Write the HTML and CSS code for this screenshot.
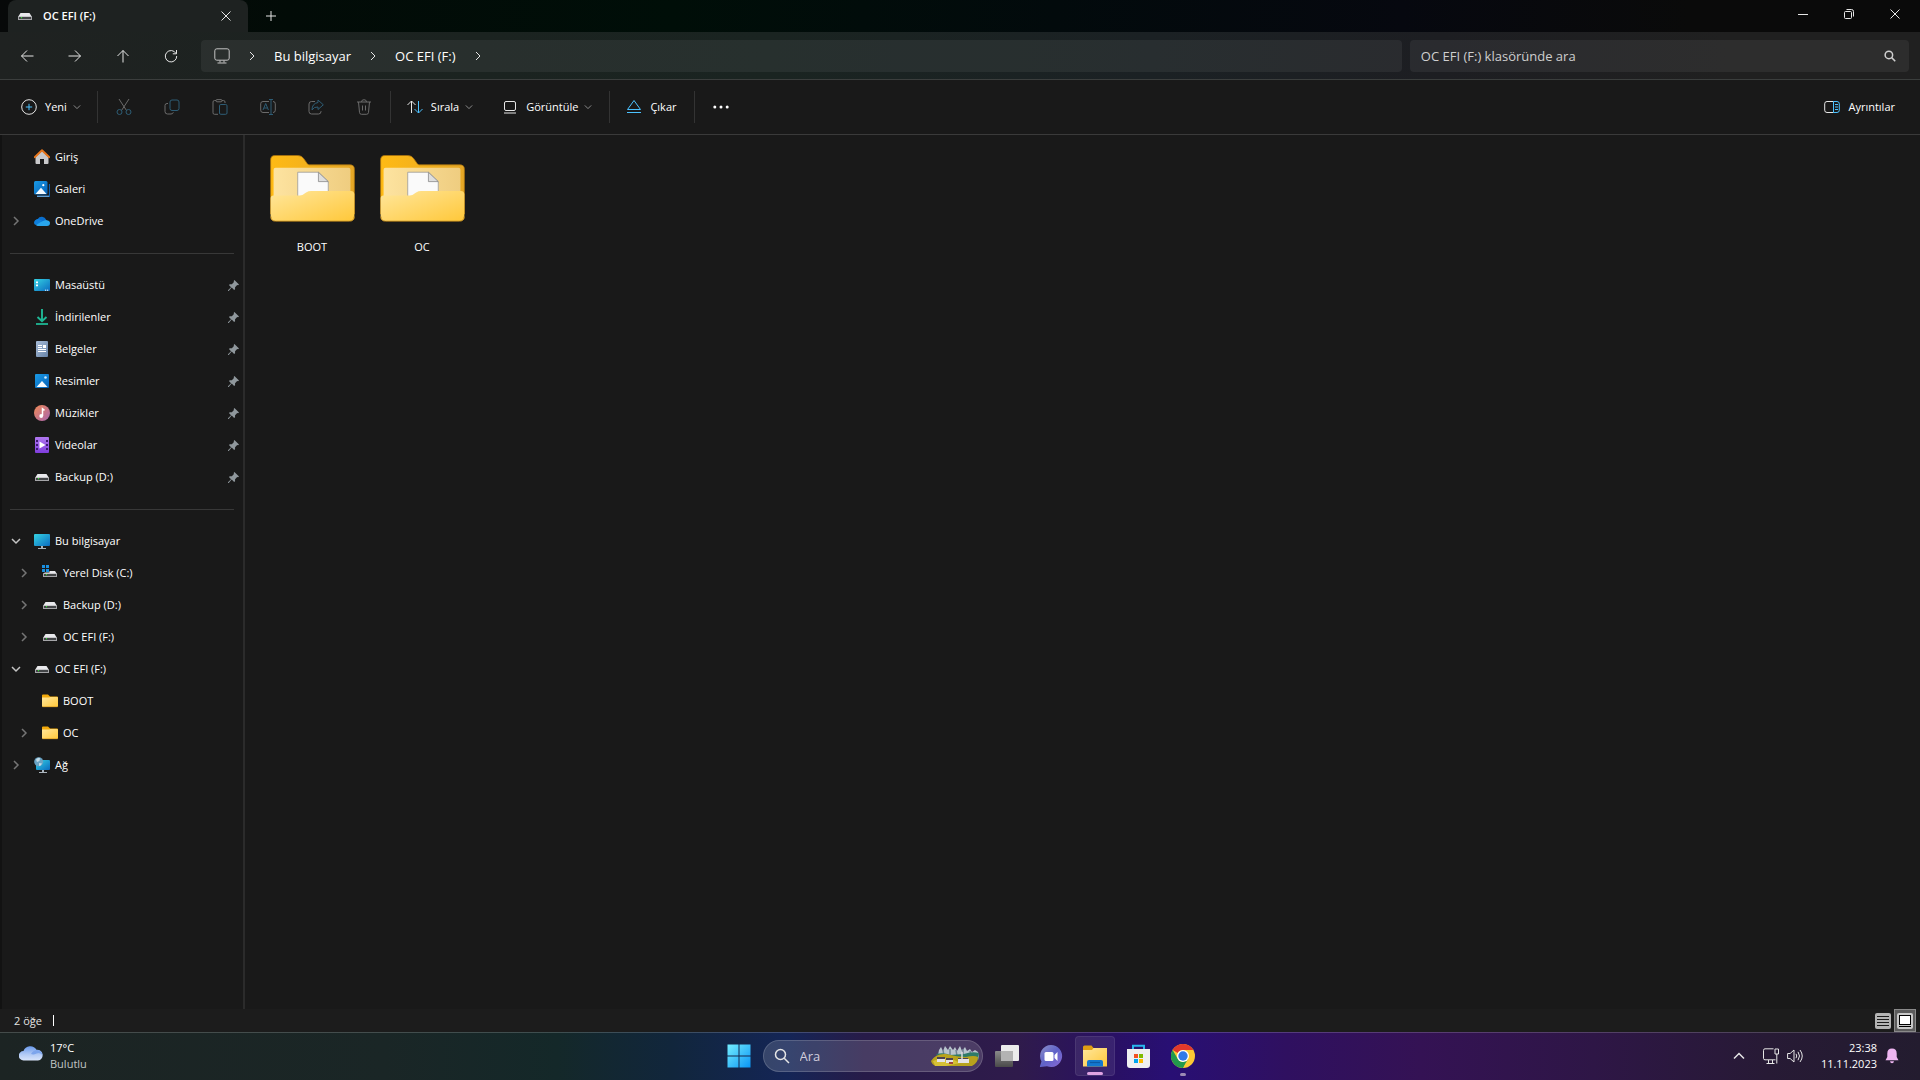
FILE: index.html
```html
<!DOCTYPE html>
<html lang="tr">
<head>
    <meta charset="UTF-8">
    <meta name="viewport" content="width=device-width, initial-scale=1.0">
    <title>OC EFI (F:)</title>
    <link rel="stylesheet" href="styles.css">
</head>
<body>
    <!-- shared icons -->
    <svg class="defs" aria-hidden="true">
        <defs>
            <linearGradient id="g-front" x1="0" y1="0" x2="1" y2="1">
                <stop offset="0" stop-color="#ffe69b"/><stop offset="1" stop-color="#ffc83a"/>
            </linearGradient>
            <linearGradient id="g-back" x1="0" y1="0" x2="1" y2="0">
                <stop offset="0" stop-color="#ffba14"/><stop offset="1" stop-color="#e5a726"/>
            </linearGradient>
            <linearGradient id="g-inner" x1="0" y1="0" x2="1" y2="0">
                <stop offset="0" stop-color="#fde3a0"/><stop offset="1" stop-color="#efcd80"/>
            </linearGradient>
            <linearGradient id="g-blue" x1="0" y1="0" x2="1" y2="1">
                <stop offset="0" stop-color="#1a9be6"/><stop offset="1" stop-color="#0560b8"/>
            </linearGradient>
            <linearGradient id="g-cyan" x1="0" y1="0" x2="1" y2="1">
                <stop offset="0" stop-color="#35d3e3"/><stop offset="1" stop-color="#0b6bc0"/>
            </linearGradient>
            <linearGradient id="g-music" x1="0" y1="0" x2="1" y2="1">
                <stop offset="0" stop-color="#f08a55"/><stop offset="1" stop-color="#a765b0"/>
            </linearGradient>
            <linearGradient id="g-video" x1="0" y1="0" x2="0" y2="1">
                <stop offset="0" stop-color="#b077f0"/><stop offset="1" stop-color="#7f3ddd"/>
            </linearGradient>
            <linearGradient id="g-doc" x1="0" y1="0" x2="1" y2="1">
                <stop offset="0" stop-color="#a9bdd8"/><stop offset="1" stop-color="#6683a8"/>
            </linearGradient>
            <linearGradient id="g-win" x1="0" y1="0" x2="1" y2="1">
                <stop offset="0" stop-color="#74eeff"/><stop offset="1" stop-color="#0a95f5"/>
            </linearGradient>
            <linearGradient id="g-chat" x1="0" y1="0" x2="1" y2="1">
                <stop offset="0" stop-color="#8d91c8"/><stop offset=".5" stop-color="#5f62c8"/><stop offset="1" stop-color="#8a6ad6"/>
            </linearGradient>
            <linearGradient id="g-cloud" x1="0" y1="0" x2="0" y2="1">
                <stop offset="0" stop-color="#6b9bec"/><stop offset=".6" stop-color="#b5ccf5"/><stop offset="1" stop-color="#d8e4fa"/>
            </linearGradient>
            <linearGradient id="g-dark" x1="0" y1="0" x2="0" y2="1">
                <stop offset="0" stop-color="#8a8a8a"/><stop offset="1" stop-color="#4a4a4a"/>
            </linearGradient>
        </defs>
        <symbol id="i-drive" viewBox="0 0 16 16">
            <path d="M3.500 5h9L15 9H1z" fill="#e9e9ec"/>
            <path d="M1 8.500h14V12H1z" fill="#a5a5a8"/>
            <path d="M2 9h12v2H2z" fill="#434547"/>
            <path d="M4 9h1v1.300H4z" fill="#2be82b"/>
        </symbol>
        <symbol id="i-drive-c" viewBox="0 0 16 16">
            <path d="M4 6h9l2 3H1z" fill="#e9e9ec"/>
            <path d="M1 8.500h14V12H1z" fill="#a5a5a8"/>
            <path d="M2 9h12v2H2z" fill="#434547"/>
            <path d="M4 9h1v1.300H4z" fill="#2be82b"/>
            <path d="M0 0h7.500v7.500H0z" fill="#191919"/>
            <path d="M0 0h3v3H0zM4 0h3v3H4zM0 4h3v3H0zM4 4h3v3H4z" fill="#1a8fe0"/>
        </symbol>
        <symbol id="i-folder" viewBox="0 0 16 16">
            <path d="M0 2.500Q0 1.500 1 1.500h5L8 3.500h7q1 0 1 1V7H0z" fill="#f2a90b"/>
            <path d="M0 4.500h7L8.500 4H15q1 0 1 1v8q0 1-1 1H1q-1 0-1-1z" fill="url(#g-front)"/>
            <path d="M.5 13.700h15" stroke="#d99a1e" stroke-width=".7"/>
        </symbol>
        <symbol id="i-home" viewBox="0 0 16 16">
            <path d="M1.500 8L8 2l6.500 6v6q0 1-1 1H10v-5H6v5H2.500q-1 0-1-1z" fill="#c9c9cb"/>
            <path d="M.7 8.200L8 1.300l7.300 6.900" fill="none" stroke="#e8761c" stroke-width="1.900" stroke-linecap="round" stroke-linejoin="round"/>
        </symbol>
        <symbol id="i-gallery" viewBox="0 0 16 16">
            <path d="M3 15.500h12q.6 0 .6-.6V3" fill="none" stroke="#0c5fae" stroke-width="1.400"/>
            <path d="M3 15.300h12" stroke="#6aa6da" stroke-width="1.200"/>
            <rect width="13.500" height="13.500" rx="1.500" fill="url(#g-blue)"/>
            <path d="M1.500 13L7 6.800l5.500 6.200z" fill="#f4faff"/>
            <circle cx="9.300" cy="4.200" r="1.100" fill="#fff"/>
        </symbol>
        <symbol id="i-onedrive" viewBox="0 0 16 16">
            <path d="M3.500 12.500A3.400 3.400 0 0 1 3.700 6 4.800 4.800 0 0 1 12.200 6.800L9 11z" fill="#0a6fce"/>
            <path d="M2 12Q4 8 7.500 8.500L12 7q4 .5 4 3 0 3-3 3H4q-1.500 0-2-1z" fill="#29a5ec"/>
            <path d="M0 9.700Q.3 6.500 4 6q2 .3 4.500 2L2 12Q0 11.500 0 9.700z" fill="#0f7fdc"/>
        </symbol>
        <symbol id="i-desktop" viewBox="0 0 16 16">
            <rect y="2" width="16" height="12" rx="1" fill="url(#g-cyan)"/>
            <path d="M2 4.500h2v1.800H2zM2 7.500h2v1.800H2z" fill="#fff"/>
            <path d="M11 13.200h1.200M13 13.200h1.200" stroke="#fff"/>
        </symbol>
        <symbol id="i-download" viewBox="0 0 16 16">
            <path d="M8 0v12M3.500 8L8 12.300 12.500 8" fill="none" stroke="#1fb795" stroke-width="1.900"/>
            <path d="M2 15h12" stroke="#1fb795" stroke-width="1.800"/>
        </symbol>
        <symbol id="i-doc" viewBox="0 0 16 16">
            <rect x="2" width="12" height="16" rx="1" fill="url(#g-doc)"/>
            <path d="M4 4.500h4M4 6.500h4M4 8.500h8M4 10.500h8" stroke="#fff"/>
            <path d="M9 4h3v3H9z" fill="#fff"/>
        </symbol>
        <symbol id="i-picture" viewBox="0 0 16 16">
            <rect x="1" y="1" width="14" height="14" rx="1" fill="url(#g-blue)"/>
            <path d="M2.500 14L8 8l5.500 6z" fill="#f4faff"/>
            <circle cx="11.500" cy="4.500" r="1.300" fill="#cdeaff"/>
        </symbol>
        <symbol id="i-music" viewBox="0 0 16 16">
            <circle cx="8" cy="8" r="8" fill="url(#g-music)"/>
            <path d="M8.500 11V3.800l2 1.500" fill="none" stroke="#fff" stroke-width="1.500"/>
            <circle cx="7.200" cy="11" r="1.900" fill="#fff"/>
        </symbol>
        <symbol id="i-video" viewBox="0 0 16 16">
            <rect x="1" width="14" height="16" rx="1" fill="url(#g-video)"/>
            <path d="M2 3h2v2H2zM2 7h2v2H2zM2 11h2v2H2zM12 3h2v2h-2zM12 7h2v2h-2zM12 11h2v2h-2z" fill="#3c1a72"/>
            <path d="M5.500 4.500L11.500 8l-6 3.500z" fill="#fff"/>
        </symbol>
        <symbol id="i-pc" viewBox="0 0 16 16">
            <rect y="1" width="16" height="12" rx="1" fill="url(#g-cyan)"/>
            <path d="M7 13h2v2H7zM4 15h8v1H4z" fill="#a9b3bb"/>
        </symbol>
        <symbol id="i-network" viewBox="0 0 16 16">
            <rect x="2" y="3" width="14" height="10" rx="1" fill="url(#g-cyan)"/>
            <path d="M8 13h2v2H8zM5 15h8v1H5z" fill="#a9b3bb"/>
            <circle cx="4.700" cy="4.700" r="4.500" fill="#6aa3c4"/>
            <path d="M2 2.500Q4 0 6 1L5.500 4 3 5zM5 6l3 .5Q7 9 5 9z" fill="#c3dbe8"/>
        </symbol>
        <symbol id="i-right" viewBox="0 0 10 10"><path d="M3 1l4 4-4 4"/></symbol>
        <symbol id="i-down" viewBox="0 0 10 10"><path d="M1 3l4 4 4-4"/></symbol>
        <symbol id="i-pin" viewBox="0 0 12 12">
            <path d="M7 0l5 5-1 .8-1-.3-2.300 2.300V10l-1 1-2.700-2.700L.8 12H0v-.8L3.300 8 1 5.500l1-1h2.200L6.500 2.200 6.200 1z" fill="#8f979c"/>
        </symbol>
        <symbol id="i-search" viewBox="0 0 16 16"><circle cx="6.500" cy="6.500" r="5"/><path d="M10.200 10.200L15 15"/></symbol>
        <symbol id="i-close" viewBox="0 0 10 10"><path d="M.5.500l9 9M9.500.500l-9 9"/></symbol>
        <symbol id="i-big-folder" viewBox="0 0 86 68">
            <path d="M.5 5Q.5.500 5 .5h23q4 0 6 3l3.500 5q.8 1.500 2.500 1.500h41q4.500 0 4.500 4.500V60H.5z" fill="url(#g-back)" stroke="#a9730f" stroke-width=".8"/>
            <path d="M3.500 45V15q0-2 2-2h74q2 0 2 2v30z" fill="url(#g-inner)"/>
            <path d="M28 45V17.500h21l10 9.500V45z" fill="#fafafa" stroke="#999" stroke-width=".8"/>
            <path d="M49 17.500V27h10z" fill="#dedede" stroke="#888" stroke-width=".8"/>
            <path d="M.5 44q0-3 3-3H30q3 0 5-2l1.500-1q2.500-1.500 5-1.500h40.500q3 0 3.500 3v24Q85.500 67 81 67H5Q.5 67 .5 63z" fill="url(#g-front)"/>
            <path d="M.8 62.500q0 4.700 4.700 4.700h75q4.700 0 4.700-4.700" fill="none" stroke="#c08a1d" stroke-width=".9"/>
        </symbol>
    </svg>

    <header class="titlebar">
        <div class="tab">
            <svg class="icon"><use href="#i-drive"/></svg>
            <span class="tab-title">OC EFI (F:)</span>
            <button class="tab-close" aria-label="Sekmeyi kapat"><svg class="line small"><use href="#i-close"/></svg></button>
        </div>
        <button class="tab-add" aria-label="Yeni sekme"><svg class="line small" viewBox="0 0 10 10"><path d="M5 0v10M0 5h10"/></svg></button>
        <div class="window-controls">
            <button aria-label="Simge durumuna küçült"><svg class="line small" viewBox="0 0 10 10"><path d="M0 5.500h10"/></svg></button>
            <button aria-label="Önceki boyut"><svg class="line small" viewBox="0 0 10 10"><rect x=".5" y="2.500" width="7" height="7" rx="1"/><path d="M2.500.500h5q2 0 2 2v5"/></svg></button>
            <button aria-label="Kapat"><svg class="line small"><use href="#i-close"/></svg></button>
        </div>
    </header>

    <nav class="navbar">
        <div class="nav-buttons">
            <button aria-label="Geri"><svg class="line" viewBox="0 0 16 16"><path d="M14.500 8H2.500M8 2.500L2.500 8 8 13.500"/></svg></button>
            <button aria-label="İleri"><svg class="line" viewBox="0 0 16 16"><path d="M1.500 8h12M8 2.500L13.500 8 8 13.500"/></svg></button>
            <button aria-label="Yukarı"><svg class="line" viewBox="0 0 16 16"><path d="M8 14.500V2.500M2.500 8L8 2.500 13.500 8"/></svg></button>
            <button aria-label="Yenile"><svg class="line" viewBox="0 0 16 16"><path d="M13 5.500A5.700 5.700 0 1 0 13.700 8M13.500 2v3.800H9.800"/></svg></button>
        </div>
        <div class="address">
            <svg class="line address-pc" viewBox="0 0 16 16"><rect x=".8" y=".8" width="14.400" height="11.400" rx="2"/><path d="M6 12.500v2M10 12.500v2M3.500 15h9"/></svg>
            <svg class="line chev"><use href="#i-right"/></svg>
            <button class="crumb">Bu bilgisayar</button>
            <svg class="line chev"><use href="#i-right"/></svg>
            <button class="crumb">OC EFI (F:)</button>
            <svg class="line chev"><use href="#i-right"/></svg>
        </div>
        <label class="search">
            <input type="text" placeholder="OC EFI (F:) klasöründe ara" aria-label="OC EFI (F:) klasöründe ara">
            <svg class="line search-icon"><use href="#i-search"/></svg>
        </label>
    </nav>

    <div class="toolbar">
        <button class="cmd first">
            <svg class="line" viewBox="0 0 16 16"><circle cx="8" cy="8" r="7.300"/><path class="accent" d="M8 4.800v6.400M4.800 8h6.400"/></svg>
            Yeni
            <svg class="line tiny"><use href="#i-down"/></svg>
        </button>
        <span class="divider"></span>
        <button class="cmd icon-only" disabled aria-label="Kes"><svg class="line" viewBox="0 0 16 16"><path d="M3 0l7.500 11.500M13 0L5.500 11.500"/><g class="accent"><circle cx="3.500" cy="13" r="2.500"/><circle cx="12.500" cy="13" r="2.500"/></g></svg></button>
        <button class="cmd icon-only" disabled aria-label="Kopyala"><svg class="line" viewBox="0 0 16 16"><path d="M4 4.500H3Q1 4.500 1 6.500v6Q1 15 3.500 15H7q2 0 2.300-1.700"/><rect class="accent" x="6" y="1" width="9" height="10.500" rx="2"/></svg></button>
        <button class="cmd icon-only" disabled aria-label="Yapıştır"><svg class="line" viewBox="0 0 16 16"><path d="M6 15.300H2.500q-1.500 0-1.500-1.500V3q0-1.500 1.500-1.500H4M10 1.500h1.500Q13 1.500 13 3v1"/><rect x="4" y=".6" width="6" height="2.200" rx="1"/><rect class="accent" x="7.500" y="5.500" width="7.500" height="9.800" rx="1.300"/></svg></button>
        <button class="cmd icon-only" disabled aria-label="Yeniden adlandır"><svg class="line" viewBox="0 0 16 16"><path d="M9 2.500H3Q.7 2.500.7 4.800v6.400q0 2.300 2.300 2.300h6M13 2.500q2.300 0 2.300 2.300v6.400q0 2.300-2.300 2.300"/><path class="accent" d="M9 .5h4M11 .5v15M9 15.500h4M3 11l2.700-6.500L8.400 11M3.900 9h3.600"/></svg></button>
        <button class="cmd icon-only" disabled aria-label="Paylaş"><svg class="line" viewBox="0 0 16 16"><path d="M7 2.500H3.500Q1 2.500 1 5v7.500Q1 15 3.500 15h7q2.500 0 2.500-2.500V12"/><path class="accent" d="M10 1l5.300 4.800L10 10.500V8Q6 7.500 4 11q0-6.500 6-7.500z"/></svg></button>
        <button class="cmd icon-only" disabled aria-label="Sil"><svg class="line" viewBox="0 0 16 16"><path d="M1 3h14M5.500 3Q5.500.700 8 .7T10.500 3M2.500 3l1 10.500q.2 1.800 2 1.800h5q1.800 0 2-1.800l1-10.500M6.500 6.500v5M9.500 6.500v5"/></svg></button>
        <span class="divider"></span>
        <button class="cmd">
            <svg class="line" viewBox="0 0 16 16"><path d="M4.500 14V2M.5 6l4-4 4 4"/><path class="accent" d="M11.500 2v12M7.500 10l4 4 4-4"/></svg>
            Sırala
            <svg class="line tiny"><use href="#i-down"/></svg>
        </button>
        <button class="cmd">
            <svg class="line" viewBox="0 0 16 16"><rect x="2.500" y="2.500" width="11" height="9" rx="1.500"/><path d="M2 14h12"/></svg>
            Görüntüle
            <svg class="line tiny"><use href="#i-down"/></svg>
        </button>
        <span class="divider"></span>
        <button class="cmd">
            <svg class="line" viewBox="0 0 16 16"><path class="accent" d="M8 1.500L1.500 10.500h13zM1 13.500h14"/></svg>
            Çıkar
        </button>
        <span class="divider"></span>
        <button class="cmd icon-only" aria-label="Daha fazla"><svg class="dots" viewBox="0 0 16 16"><circle cx="1.800" cy="8" r="1.500"/><circle cx="8" cy="8" r="1.500"/><circle cx="14.200" cy="8" r="1.500"/></svg></button>
        <button class="cmd details">
            <svg class="line" viewBox="0 0 16 16"><path d="M9.500 2.500H3Q.7 2.500.7 4.800v6.400q0 2.300 2.300 2.300h6.500"/><path class="accent" d="M9.500 2.500H13q2.300 0 2.300 2.300v6.400q0 2.300-2.300 2.300H9.500zM11 5.500h3M11 8h3M11 10.500h3"/></svg>
            Ayrıntılar
        </button>
    </div>

    <main class="content">
        <aside class="sidebar">
            <a class="row" href="#"><span class="twisty"></span><svg class="icon"><use href="#i-home"/></svg>Giriş</a>
            <a class="row" href="#"><span class="twisty"></span><svg class="icon"><use href="#i-gallery"/></svg>Galeri</a>
            <a class="row" href="#"><svg class="twisty"><use href="#i-right"/></svg><svg class="icon"><use href="#i-onedrive"/></svg>OneDrive</a>
            <hr>
            <a class="row" href="#"><span class="twisty"></span><svg class="icon"><use href="#i-desktop"/></svg>Masaüstü<svg class="pin"><use href="#i-pin"/></svg></a>
            <a class="row" href="#"><span class="twisty"></span><svg class="icon"><use href="#i-download"/></svg>İndirilenler<svg class="pin"><use href="#i-pin"/></svg></a>
            <a class="row" href="#"><span class="twisty"></span><svg class="icon"><use href="#i-doc"/></svg>Belgeler<svg class="pin"><use href="#i-pin"/></svg></a>
            <a class="row" href="#"><span class="twisty"></span><svg class="icon"><use href="#i-picture"/></svg>Resimler<svg class="pin"><use href="#i-pin"/></svg></a>
            <a class="row" href="#"><span class="twisty"></span><svg class="icon"><use href="#i-music"/></svg>Müzikler<svg class="pin"><use href="#i-pin"/></svg></a>
            <a class="row" href="#"><span class="twisty"></span><svg class="icon"><use href="#i-video"/></svg>Videolar<svg class="pin"><use href="#i-pin"/></svg></a>
            <a class="row" href="#"><span class="twisty"></span><svg class="icon"><use href="#i-drive"/></svg>Backup (D:)<svg class="pin"><use href="#i-pin"/></svg></a>
            <hr>
            <a class="row" href="#"><svg class="twisty open"><use href="#i-down"/></svg><svg class="icon"><use href="#i-pc"/></svg>Bu bilgisayar</a>
            <a class="row child" href="#"><svg class="twisty"><use href="#i-right"/></svg><svg class="icon"><use href="#i-drive-c"/></svg>Yerel Disk (C:)</a>
            <a class="row child" href="#"><svg class="twisty"><use href="#i-right"/></svg><svg class="icon"><use href="#i-drive"/></svg>Backup (D:)</a>
            <a class="row child" href="#"><svg class="twisty"><use href="#i-right"/></svg><svg class="icon"><use href="#i-drive"/></svg>OC EFI (F:)</a>
            <a class="row" href="#"><svg class="twisty open"><use href="#i-down"/></svg><svg class="icon"><use href="#i-drive"/></svg>OC EFI (F:)</a>
            <a class="row child" href="#"><span class="twisty"></span><svg class="icon"><use href="#i-folder"/></svg>BOOT</a>
            <a class="row child" href="#"><svg class="twisty"><use href="#i-right"/></svg><svg class="icon"><use href="#i-folder"/></svg>OC</a>
            <a class="row" href="#"><svg class="twisty"><use href="#i-right"/></svg><svg class="icon"><use href="#i-network"/></svg>Ağ</a>
        </aside>
        <section class="files">
            <a class="file" href="#"><svg class="file-icon"><use href="#i-big-folder"/></svg>BOOT</a>
            <a class="file" href="#"><svg class="file-icon"><use href="#i-big-folder"/></svg>OC</a>
        </section>
    </main>

    <div class="statusbar">
        <span class="count">2 öğe</span>
        <div class="views">
            <button aria-label="Ayrıntılar görünümü"><svg viewBox="0 0 16 16"><rect width="16" height="16" rx="2" fill="#b4b4b4"/><path d="M2 3.500h12M2 6.500h12M2 9.500h12M2 12.500h12" stroke="#1a1a1a"/></svg></button>
            <button class="active" aria-label="Büyük simgeler"><svg viewBox="0 0 16 16"><rect width="16" height="16" rx="2" fill="#c8c8c8"/><rect x="2.500" y="2.500" width="11" height="9" fill="#fff" stroke="#000"/><path d="M2 13.500h12" stroke="#000"/></svg></button>
        </div>
    </div>

    <footer class="taskbar">
        <button class="weather">
            <svg viewBox="0 0 24 16"><path d="M4.500 15.500A4.500 4.500 0 0 1 4.500 6 7.200 7.200 0 0 1 17.500 4.800 5.400 5.400 0 0 1 19 15.500z" fill="url(#g-cloud)"/><path d="M12 9q2-4 7-4 4 1 4.500 5-3-3-6-1.500T12 9z" fill="#7da5ec"/></svg>
            <span class="weather-text"><span>17°C</span><span class="muted">Bulutlu</span></span>
        </button>

        <div class="apps">
            <button class="app" aria-label="Başlat"><svg viewBox="0 0 24 24"><path d="M.5.500h11v11H.5zM12.500.500h11v11h-11zM.5 12.500h11v11H.5zM12.500 12.500h11v11h-11z" fill="url(#g-win)"/></svg></button>
            <label class="task-search">
                <svg class="line"><use href="#i-search"/></svg>
                <input type="text" placeholder="Ara" aria-label="Ara">
                <svg class="scene" viewBox="0 0 49 22">
                    <path d="M8 10l1-5 2-3 2 4 2-5 3 4 2-4 3 4 2-3 2 4 3-5 2 5 3-4 2 4 3-2 2 3 3-2 3 2 1 4-1 4H8z" fill="#b9c5ce"/>
                    <path d="M13 5l1 6M20 4v7M26 5l1 6M33 4v7M40 6l1 5" stroke="#6f8394" stroke-width="1.500"/>
                    <path d="M6 9q8-2 14 1l14-1q8-3 15-1l-1 7H12z" fill="#2e7b68"/>
                    <path d="M1 16Q6 8 16 9q12 3 20 3 8-2 12 0 0 6-6 9H6q-4-1-5-5z" fill="#b8a31d"/>
                    <path d="M3 16q10-5 19-2l8 4-14 3H5z" fill="#d6c136"/>
                    <path d="M7 13h8v4H7zM16 15h7v3h-7zM28 14h11v4H28z" fill="#e6e4e4"/>
                    <path d="M7 12h8v2H7zM16 13h7v2h-7zM28 13h10v1H28z" fill="#4d4350"/>
                    <path d="M32 7v8" stroke="#ddd" stroke-width="1.500"/>
                    <path d="M19 17h4v2h-4z" fill="#a3443a"/>
                </svg>
            </label>
            <button class="app" aria-label="Görev görünümü"><svg viewBox="0 0 24 24"><rect x="6" y="1" width="18" height="16" rx="1" fill="#ececec"/><rect y="7" width="18" height="16" rx="1" fill="url(#g-dark)"/><path d="M6 7h12v10H6z" fill="#b3b3b3"/></svg></button>
            <button class="app" aria-label="Sohbet"><svg viewBox="0 0 24 24"><path d="M12 1a11 11 0 1 1-4 21.200L1.500 23q-.8 0-.5-1l1.500-4.500A11 11 0 0 1 12 1z" fill="url(#g-chat)"/><rect x="5.500" y="8" width="9" height="9" rx="1.500" fill="#fff"/><path d="M15.500 11l3-3v9l-3-3z" fill="#fff"/></svg></button>
            <button class="app active" aria-label="Dosya Gezgini"><svg viewBox="0 0 24 24"><path d="M0 3q0-1.500 1.500-1.500h7L10.500 4H23v4H0z" fill="#e09f14"/><path d="M0 6h9l1.500-2H24v18.500H0z" fill="url(#g-front)"/><path d="M4 22.500V18q0-2 2-2h12q2 0 2 2v4.500z" fill="#1377cf"/><path d="M7 18.500h10" stroke="#0c5aa6" stroke-width="1.200"/></svg></button>
            <button class="app" aria-label="Microsoft Store"><svg viewBox="0 0 24 24"><path d="M6 6V1.800h11V6" fill="none" stroke="#29b7ee" stroke-width="2"/><path d="M0 5h23v16q0 3-3 3H3q-3 0-3-3z" fill="#efeff1"/><path d="M7 10h4v4H7z" fill="#f25022"/><path d="M12 10h4v4h-4z" fill="#7fba00"/><path d="M7 15h4v4H7z" fill="#00a4ef"/><path d="M12 15h4v4h-4z" fill="#ffb900"/></svg></button>
            <button class="app running" aria-label="Google Chrome"><svg viewBox="0 0 24 24"><circle cx="12" cy="12" r="12" fill="#fcc934"/><path d="M1.600 6A12 12 0 0 1 22.400 6H12A6 6 0 0 0 6.800 9z" fill="#e2382c"/><path d="M1.600 6L6.800 15A6 6 0 0 0 12 18h2.500L12 24A12 12 0 0 1 1.600 6z" fill="#229a4c"/><path d="M11.700 24L17 15l-5 3z" fill="#229a4c"/><circle cx="12" cy="12" r="6" fill="#fff"/><circle cx="12" cy="12" r="4.700" fill="#3079e8"/></svg></button>
        </div>

        <div class="tray">
            <button aria-label="Gizli simgeleri göster"><svg class="line tray-up" viewBox="0 0 12 12"><path d="M1 8.500l5-5 5 5"/></svg></button>
            <button class="status-icons" aria-label="Ağ ve ses">
                <svg class="line" viewBox="0 0 16 16"><path d="M10.500.800H2Q.5.800.5 2.300v8q0 1.500 1.500 1.500h10.500M5.500 12v3M9.500 12v3M3.500 15.500h8M12 1h3.500v5H12zM13.800 6v9.500"/></svg>
                <svg class="line" viewBox="0 0 16 16"><path d="M.6 5.500h2.500L7 2v12l-3.900-3.500H.6zM9 5.800q1.500 2.200 0 4.400M11 3.800q3 4.200 0 8.400M13 2q4.500 6 0 12"/></svg>
            </button>
            <button class="clock"><span>23:38</span><span>11.11.2023</span></button>
            <button aria-label="Bildirimler"><svg class="bell" viewBox="0 0 14 16"><path d="M7 .5q4.700 0 4.700 5V9l1.800 3.200H.5L2.300 9V5.500q0-5 4.700-5zM5 13.200h4q-.3 2-2 2t-2-2z" fill="#efb6f2"/></svg></button>
        </div>
    </footer>
</body>
</html>
```
FILE: styles.css
```css
* {
    box-sizing: border-box;
}

body {
    margin: 0;
    height: 100vh;
    display: flex;
    flex-direction: column;
    background-color: #191919;
    color: #fff;
    font-family: "Open Sans", "Noto Sans", sans-serif;
    font-size: 11px;
    line-height: 16px;
    overflow: hidden;
}

button {
    display: flex;
    align-items: center;
    justify-content: center;
    padding: 0;
    border: none;
    background: none;
    color: inherit;
    font: inherit;
}

a {
    color: inherit;
    text-decoration: none;
}

input {
    flex: 1;
    min-width: 0;
    padding: 0;
    border: none;
    outline: none;
    background: none;
    color: #fff;
    font: inherit;
}

svg {
    flex: none;
}

.defs {
    position: absolute;
    width: 0;
    height: 0;
}

.icon {
    width: 16px;
    height: 16px;
}

.line {
    width: 16px;
    height: 16px;
    fill: none;
    stroke: #e6e6e6;
    stroke-width: 1;
}

.line.small {
    width: 10px;
    height: 10px;
}

.line .accent {
    stroke: #4cc2ff;
}

/* title bar */
.titlebar {
    display: flex;
    align-items: flex-start;
    height: 32px;
    padding-left: 8px;
    background: linear-gradient(90deg, #070909 0, #020b07 15%, #000e08 35%, #020a0c 55%, #06080f 73%, #0a0a0a 88%, #0a0a0a 100%);
}

.tab {
    display: flex;
    align-items: center;
    width: 240px;
    height: 32px;
    padding: 0 10px 0 9px;
    border-radius: 8px 8px 0 0;
    background-color: #1e2221;
}

.tab-title {
    flex: 1;
    margin-left: 10px;
    font-weight: 600;
}

.tab-close {
    width: 24px;
    height: 24px;
}

.tab-add {
    width: 45px;
    height: 32px;
}

.window-controls {
    display: flex;
    margin-left: auto;
    padding-right: 2px;
}

.window-controls button {
    width: 46px;
    height: 28px;
}

/* navigation bar */
.navbar {
    display: flex;
    align-items: center;
    height: 48px;
    padding-right: 11px;
    border-bottom: 1px solid #3b3e3d;
    background: linear-gradient(90deg, #1f2221 0, #1b2320 25%, #1a2421 40%, #1b2124 60%, #1d1e22 75%, #202020 90%);
    font-size: 13px;
}

.nav-buttons {
    display: flex;
    padding: 0 6px 0 3px;
}

.nav-buttons button {
    width: 48px;
    height: 32px;
}

.address,
.search {
    display: flex;
    align-items: center;
    height: 32px;
    border-radius: 4px;
    background-color: rgba(255, 255, 255, 0.06);
}

.address {
    flex: 1;
    margin-right: 8px;
    padding-left: 13px;
}

.address-pc {
    margin-right: 13px;
    stroke: #c4c4c4;
}

.chev {
    width: 10px;
    height: 10px;
    margin: 0 4px;
}

.crumb {
    padding: 0 13px;
    height: 28px;
}

.search {
    width: 26vw;
    padding: 0 13px 0 11px;
}

.search input::placeholder {
    color: #cfcfcf;
    opacity: 1;
}

.search-icon {
    width: 12px;
    height: 12px;
    stroke-width: 2;
    stroke: #d0d0d0;
}

/* command bar */
.toolbar {
    display: flex;
    align-items: center;
    height: 55px;
    border-bottom: 1px solid #3a3a3a;
    background-color: #191919;
}

.cmd {
    gap: 8px;
    height: 32px;
    padding: 0 15px 0 14px;
}

.cmd.first {
    padding: 0 14px 0 21px;
}

.cmd.icon-only {
    width: 48px;
    padding: 0;
}

.cmd:disabled {
    opacity: 0.4;
}

.cmd .tiny {
    width: 8px;
    height: 8px;
    margin-left: -2px;
    stroke: #a8a8a8;
}

.cmd .dots {
    width: 16px;
    height: 16px;
    fill: #fff;
}

.cmd.details {
    margin-left: auto;
    padding-right: 25px;
}

.divider {
    width: 1px;
    height: 32px;
    margin: 0 2px;
    background-color: #333;
}

/* tree and files */
.content {
    flex: 1;
    display: flex;
    min-height: 0;
}

.sidebar {
    width: 245px;
    padding-top: 6px;
    border-left: 2px solid #121212;
    border-right: 2px solid #2b2b2b;
}

.row {
    display: flex;
    align-items: center;
    height: 32px;
    padding: 0 4px 0 9px;
}

.row.child {
    padding-left: 17px;
}

.row .icon {
    margin: 0 5px 0 13px;
}

.twisty {
    width: 10px;
    height: 10px;
    fill: none;
    stroke: #757575;
    stroke-width: 1.5;
}

.twisty.open {
    stroke: #c4c4c4;
}

.pin {
    width: 11px;
    height: 11px;
    margin-left: auto;
}

hr {
    height: 1px;
    margin: 16px 9px 15px 8px;
    border: none;
    background-color: #383838;
}

.files {
    display: flex;
    align-items: flex-start;
    gap: 8px;
    padding: 20px 16px;
}

.file {
    display: flex;
    flex-direction: column;
    align-items: center;
    gap: 17px;
    width: 102px;
}

.file-icon {
    width: 85px;
    height: 67px;
}

/* status bar */
.statusbar {
    display: flex;
    align-items: center;
    justify-content: space-between;
    height: 23px;
    padding: 0 4px 0 14px;
    background-color: #1c1c1c;
}

.count {
    padding-right: 11px;
    border-right: 1px solid #fff;
    line-height: 11px;
    color: #e4e4e4;
}

.views {
    display: flex;
    gap: 3px;
}

.views button {
    height: 23px;
}

.views .active {
    width: 22px;
    border: 1px solid #8a8a8a;
    background-color: #5c5c5c;
}

.views svg {
    width: 16px;
    height: 16px;
}

/* taskbar */
.taskbar {
    display: grid;
    grid-template-columns: 1fr auto 1fr;
    align-items: center;
    height: 48px;
    box-shadow: inset 0 1px rgba(255, 255, 255, 0.18);
    background: linear-gradient(90deg, #1c2423 0, #1a2626 20%, #142829 29%, #11263c 35%, #142556 41%, #271b48 45%, #2f1b4b 53%, #291064 58%, #280f74 61%, #2f1060 67%, #341254 74%, #2e1646 83%, #271a35 92%, #231c2f 100%);
}

.weather {
    align-items: flex-start;
    justify-self: start;
    gap: 7px;
    padding-left: 19px;
    text-align: left;
}

.weather svg {
    width: 24px;
    height: 16px;
    margin-top: 5px;
}

.weather-text,
.clock {
    display: flex;
    flex-direction: column;
}

.muted {
    color: #c0c4c4;
}

.apps {
    display: flex;
    align-items: center;
    gap: 4px;
    padding-left: 1px;
}

.app {
    position: relative;
    width: 40px;
    height: 40px;
    border-radius: 4px;
}

.app svg {
    width: 24px;
    height: 24px;
}

.app.active {
    border: 1px solid rgba(255, 255, 255, 0.08);
    background-color: rgba(255, 255, 255, 0.08);
}

.app.active::after,
.app.running::after {
    content: "";
    position: absolute;
    bottom: 0;
    width: 16px;
    height: 3px;
    border-radius: 2px;
    background-color: #e0a3e3;
}

.app.running::after {
    width: 6px;
    background-color: #9c8bb5;
}

.task-search {
    display: flex;
    align-items: center;
    width: 220px;
    height: 32px;
    padding: 0 3px 0 10px;
    border: 1px solid rgba(255, 255, 255, 0.16);
    border-radius: 16px;
    background-color: rgba(255, 255, 255, 0.15);
    font-size: 13px;
}

.task-search .line {
    margin-right: 10px;
    stroke-width: 1.5;
}

.task-search input::placeholder {
    color: #d0cddc;
    opacity: 1;
}

.task-search .scene {
    width: 49px;
    height: 22px;
}

.tray {
    display: flex;
    align-items: center;
    justify-self: end;
    gap: 8px;
    padding-right: 21px;
}

.tray-up {
    width: 12px;
    height: 12px;
    stroke-width: 1.5;
}

.status-icons {
    gap: 8px;
    padding: 0 10px;
}

.clock {
    align-items: flex-end;
}

.bell {
    width: 14px;
    height: 16px;
}
```
